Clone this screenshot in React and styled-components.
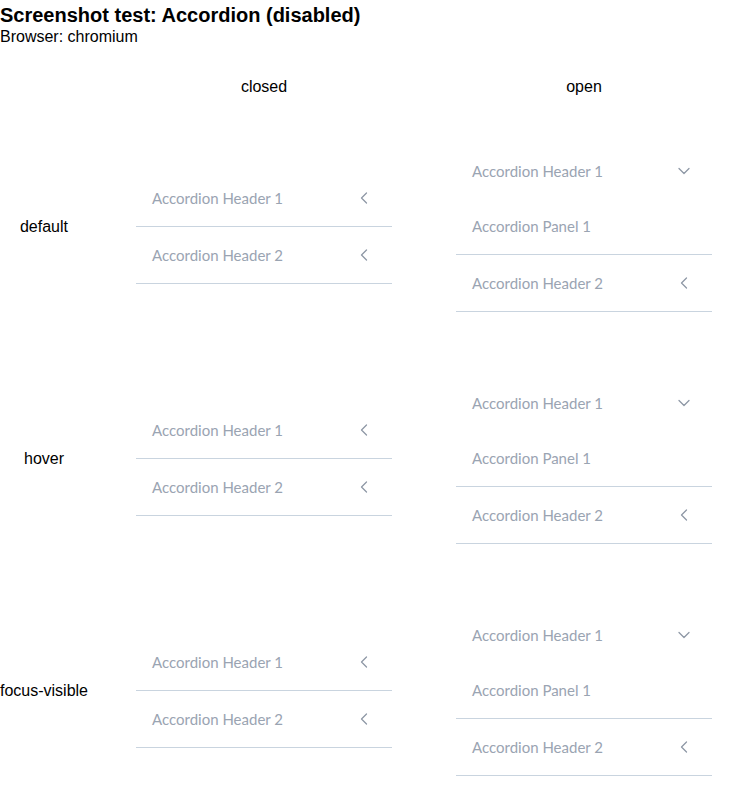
import React from "react"
import styled, { createGlobalStyle } from "styled-components"

const colors = {
  text: "#000",
  disabled: "#9aa4b2",
  icon: "#8e98a6",
  border: "#c9d4df",
}

const GlobalStyle = createGlobalStyle`
  body {
    margin: 0;
    background: #fff;
    font-family: "Liberation Sans", Arial, sans-serif;
    color: ${colors.text};
  }
`

const Page = styled.div`
  padding-top: 4px;
`

const Title = styled.div`
  font-size: 20px;
  font-weight: bold;
`

const Subtitle = styled.div`
  font-size: 16px;
  margin-top: 1px;
`

const Grid = styled.div`
  display: grid;
  grid-template-columns: 88px 352px 288px;
  grid-auto-rows: auto;
`

const HeadCell = styled.div`
  display: flex;
  justify-content: center;
  font-size: 16px;
  padding: 32px 0 15px;
`

const Cell = styled.div`
  display: flex;
  align-items: center;
  justify-content: center;
  height: 232px;
  font-size: 16px;
  white-space: nowrap;
`

const Accordion = styled.div`
  width: 256px;
  font-family: Lato, "Noto Sans", sans-serif;
  font-size: 15px;
  color: ${colors.disabled};
`

const Item = styled.div`
  border-bottom: 1px solid ${colors.border};
`

const Header = styled.div`
  display: flex;
  align-items: center;
  justify-content: space-between;
  height: 56px;
  padding: 0 20px 0 16px;
  cursor: not-allowed;
`

const Panel = styled.div`
  display: flex;
  align-items: center;
  height: 55px;
  padding-left: 16px;
`

const Chevron = ({ open }) => (
  <svg width="16" height="16" viewBox="0 0 16 16" fill="none">
    <polyline
      points={open ? "3,5.5 8,10.5 13,5.5" : "10.5,3 5.5,8 10.5,13"}
      stroke={colors.icon}
      strokeWidth="1.3"
      strokeLinecap="round"
      strokeLinejoin="round"
    />
  </svg>
)

const DemoAccordion = ({ open }) => (
  <Accordion>
    <Item>
      <Header>
        Accordion Header 1
        <Chevron open={open} />
      </Header>
      {open && <Panel>Accordion Panel 1</Panel>}
    </Item>
    <Item>
      <Header>
        Accordion Header 2
        <Chevron />
      </Header>
    </Item>
  </Accordion>
)

const states = ["default", "hover", "focus-visible"]

const App = () => (
  <Page>
    <GlobalStyle />
    <Title>Screenshot test: Accordion (disabled)</Title>
    <Subtitle>Browser: chromium</Subtitle>
    <Grid>
      <HeadCell />
      <HeadCell>closed</HeadCell>
      <HeadCell>open</HeadCell>
      {states.map(state => (
        <React.Fragment key={state}>
          <Cell>{state}</Cell>
          <Cell>
            <DemoAccordion />
          </Cell>
          <Cell>
            <DemoAccordion open />
          </Cell>
        </React.Fragment>
      ))}
    </Grid>
  </Page>
)

export default App
